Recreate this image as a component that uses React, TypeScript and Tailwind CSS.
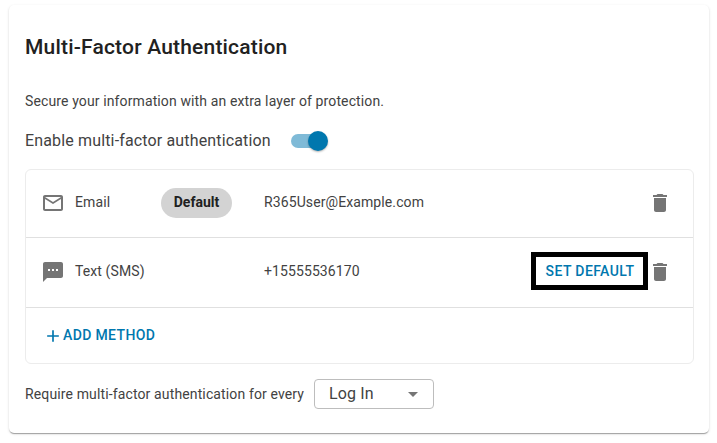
const font = "font-['Roboto',sans-serif]";

function Icon({ d, className }: { d: string; className?: string }) {
  return (
    <svg viewBox="0 0 24 24" className={className} fill="currentColor">
      <path d={d} />
    </svg>
  );
}

const mailPath =
  "M20 4H4c-1.1 0-1.99.9-1.99 2L2 18c0 1.1.9 2 2 2h16c1.1 0 2-.9 2-2V6c0-1.1-.9-2-2-2zm0 14H4V8l8 5 8-5v10zm-8-7L4 6h16l-8 5z";
const smsPath =
  "M20 2H4c-1.1 0-1.99.9-1.99 2L2 22l4-4h14c1.1 0 2-.9 2-2V4c0-1.1-.9-2-2-2zM9 11H7V9h2v2zm4 0h-2V9h2v2zm4 0h-2V9h2v2z";
const trashPath =
  "M6 19c0 1.1.9 2 2 2h8c1.1 0 2-.9 2-2V7H6v12zM19 4h-3.5l-1-1h-5l-1 1H5v2h14V4z";
const plusPath = "M19 13h-6v6h-2v-6H5v-2h6V5h2v6h6v2z";
const arrowPath = "M7 10l5 5 5-5z";

export default function App() {
  return (
    <div className={`${font} w-[717px] h-[443px] overflow-hidden bg-white pt-[5px] pl-[9px] text-[#212121]`}>
      <div className="w-[700px] h-[428px] bg-white rounded-[5px] shadow-[0_2px_1px_-1px_rgba(0,0,0,0.2),0_1px_1px_0_rgba(0,0,0,0.14),0_1px_3px_0_rgba(0,0,0,0.12)] pt-[29px] px-4">
        <h2 className="text-[21px] leading-[26px] font-medium tracking-[0.19px] text-[#212121]">
          Multi-Factor Authentication
        </h2>

        <p className="mt-[31px] text-[14px] leading-[20px] tracking-[0.12px] text-[#424242]">
          Secure your information with an extra layer of protection.
        </p>

        <div className="mt-[18px] h-[24px] flex items-center">
          <span className="text-[16px] leading-[24px] tracking-[0.15px] text-[#424242]">
            Enable multi-factor authentication
          </span>
          <div className="relative ml-[20px] w-[34px] h-[14px] rounded-full bg-[#7fbad7]">
            <div className="absolute right-[-3px] top-[-3px] w-[20px] h-[20px] rounded-full bg-[#0077ae] shadow-[0_1px_2px_rgba(0,0,0,0.3)]" />
          </div>
        </div>

        <div className="mt-[16px] w-[669px] border border-[#ececec] rounded-[6px]">
          <div className="h-[68px] flex items-center pb-[2px] pl-[15px] pr-[21px] border-b border-[#e0e0e0]">
            <Icon d={mailPath} className="w-6 h-6 text-[#757575]" />
            <span className="ml-[10px] w-[86px] text-[14px] tracking-[0.1px] text-[#424242] -mt-px">Email</span>
            <span className="w-[71px] h-[30px] rounded-full bg-[#d3d3d3] flex items-center justify-center text-[14px] font-bold text-[#212121]">
              Default
            </span>
            <span className="ml-[32px] text-[14px] tracking-[0.1px] text-[#424242] -mt-px">R365User@Example.com</span>
            <Icon d={trashPath} className="ml-auto w-6 h-6 text-[#757575]" />
          </div>

          <div className="h-[70px] flex items-center pb-[2px] pl-[15px] pr-[21px] border-b border-[#e0e0e0]">
            <Icon d={smsPath} className="w-6 h-6 text-[#757575]" />
            <span className="ml-[10px] w-[189px] text-[14px] tracking-[0.1px] text-[#424242] -mt-px">Text (SMS)</span>
            <span className="text-[14px] tracking-[0.1px] text-[#424242] -mt-px">+15555536170</span>
            <div className="ml-auto flex items-center">
              <span className="w-[117px] h-[38px] -mt-px border-[5px] border-black flex items-center justify-center pl-px text-[14px] font-medium tracking-[0.4px] text-[#0077ae]">
                SET DEFAULT
              </span>
              <Icon d={trashPath} className="w-6 h-6 text-[#757575]" />
            </div>
          </div>

          <div className="h-[55px] flex items-center pl-[17px] text-[#0077ae]">
            <Icon d={plusPath} className="w-5 h-5 mt-px" />
            <span className="text-[14px] font-medium tracking-[0.36px]">ADD METHOD</span>
          </div>
        </div>

        <div className="mt-[15px] flex items-center">
          <span className="text-[14px] tracking-[0.13px] text-[#424242]">Require multi-factor authentication for every</span>
          <div className="ml-[10px] w-[120px] h-[30px] border border-[#bdbdbd] rounded-[4px] flex items-center pl-[14px] pr-[8px]">
            <span className="text-[16px] tracking-[0.1px] text-[#424242]">Log In</span>
            <Icon d={arrowPath} className="ml-auto w-6 h-6 text-[#757575]" />
          </div>
        </div>
      </div>
    </div>
  );
}
